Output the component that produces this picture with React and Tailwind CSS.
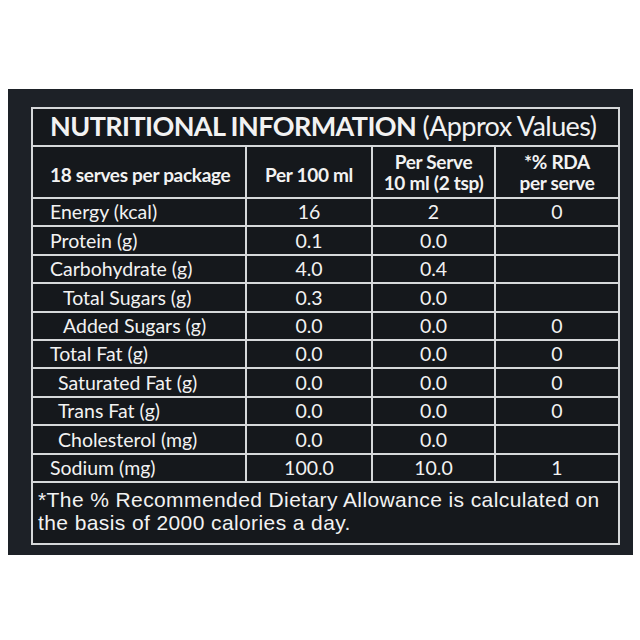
import React from 'react'

const rows = [
  { label: 'Energy (kcal)', indent: 0, per100: '16', serve: '2', rda: '0' },
  { label: 'Protein (g)', indent: 0, per100: '0.1', serve: '0.0', rda: '' },
  { label: 'Carbohydrate (g)', indent: 0, per100: '4.0', serve: '0.4', rda: '' },
  { label: 'Total Sugars (g)', indent: 2, per100: '0.3', serve: '0.0', rda: '' },
  { label: 'Added Sugars (g)', indent: 2, per100: '0.0', serve: '0.0', rda: '0' },
  { label: 'Total Fat (g)', indent: 0, per100: '0.0', serve: '0.0', rda: '0' },
  { label: 'Saturated Fat (g)', indent: 1, per100: '0.0', serve: '0.0', rda: '0' },
  { label: 'Trans Fat (g)', indent: 1, per100: '0.0', serve: '0.0', rda: '0' },
  { label: 'Cholesterol (mg)', indent: 1, per100: '0.0', serve: '0.0', rda: '' },
  { label: 'Sodium (mg)', indent: 0, per100: '100.0', serve: '10.0', rda: '1' },
]

const cell = 'border-2 border-[#d6d8da] p-0'

export default function App() {
  return (
    <div className="w-[640px] h-[640px] bg-white pt-[89px] pl-[8px]">
      {/* Dark label panel */}
      <div className="w-[625px] h-[466px] bg-[#1d2127] pt-[18px] pl-[23px]">
        <table
          className="w-[587px] table-fixed border-collapse text-[#f2f2f2] bg-[#15181c]"
          style={{ fontFamily: 'Lato, "Open Sans", sans-serif' }}
        >
          <colgroup>
            <col className="w-[214px]" />
            <col className="w-[126px]" />
            <col className="w-[123px]" />
            <col className="w-[124px]" />
          </colgroup>
          <tbody>
            <tr className="h-[38px]">
              <td colSpan={4} className={`${cell} pl-[17px] pb-[3px] text-[27px] leading-none tracking-[-0.6px] whitespace-nowrap`}>
                <span className="font-bold">NUTRITIONAL INFORMATION</span>{' '}
                <span className="font-normal">(Approx Values)</span>
              </td>
            </tr>
            <tr className="h-[52px] text-[19px] font-bold tracking-[-0.3px] leading-[21px]">
              <td className={`${cell} pl-[17px] pt-[4px]`}>18 serves per package</td>
              <td className={`${cell} text-center pt-[4px]`}>Per 100 ml</td>
              <td className={`${cell} text-center`}>
                Per Serve
                <br />
                10 ml (2 tsp)
              </td>
              <td className={`${cell} text-center`}>
                *% RDA
                <br />
                per serve
              </td>
            </tr>
            {rows.map((r) => (
              <tr key={r.label} className="h-[28.4px] text-[19.5px] leading-none">
                <td
                  className={`${cell} ${
                    r.indent === 2 ? 'pl-[30px]' : r.indent === 1 ? 'pl-[25px]' : 'pl-[17px]'
                  }`}
                >
                  {r.label}
                </td>
                <td className={`${cell} text-center`}>{r.per100}</td>
                <td className={`${cell} text-center`}>{r.serve}</td>
                <td className={`${cell} text-center`}>{r.rda}</td>
              </tr>
            ))}
            <tr className="h-[62px]">
              <td
                colSpan={4}
                className={`${cell} pl-[5px] pb-[4px] text-[21px] leading-[23px] tracking-[0.4px] whitespace-nowrap align-middle`}
                style={{ fontFamily: '"Liberation Sans", Arial, sans-serif' }}
              >
                *The % Recommended Dietary Allowance is calculated on
                <br />
                the basis of 2000 calories a day.
              </td>
            </tr>
          </tbody>
        </table>
      </div>
    </div>
  )
}
